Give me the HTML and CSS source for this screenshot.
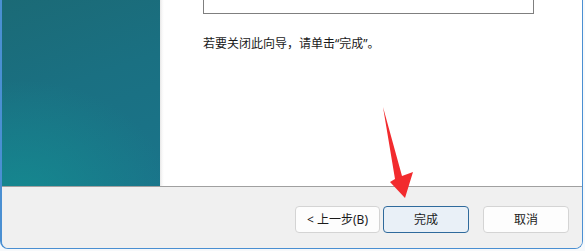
FILE: index.html
```html
<!DOCTYPE html>
<html lang="zh-CN">
<head>
<meta charset="utf-8">
<link rel="stylesheet" href="styles.css">
</head>
<body>
<div class="window">
  <div class="main">
    <div class="side"></div>
    <div class="content">
      <div class="textbox"></div>
      <p class="hint">若要关闭此向导，请单击“完成”。</p>
    </div>
  </div>
  <div class="footer">
    <button class="btn btn-back">&lt; 上一步(B)</button>
    <button class="btn btn-default">完成</button>
    <button class="btn btn-cancel">取消</button>
  </div>
</div>
<svg class="arrow" width="585" height="251" viewBox="0 0 585 251">
  <polygon points="383,107 402,176 413,172 405,198 390,182 395,179" fill="#f22b2e"/>
</svg>
</body>
</html>
```
FILE: styles.css
```css
html, body {
  margin: 0;
  padding: 0;
  background: #f7f9fb;
  width: 585px;
  height: 251px;
  overflow: hidden;
  font-family: "Noto Sans", "Noto Sans CJK SC", sans-serif;
  position: relative;
}

.window {
  width: 580px;
  height: 248px;
  border-left: 2px solid #4a8fd2;
  border-right: 1px solid #4a8fd2;
  border-bottom: 1px solid #4a8fd2;
  border-radius: 0 0 8px 8px;
  overflow: hidden;
  display: flex;
  flex-direction: column;
  background: #f0f0f0;
}

.main {
  display: flex;
  height: 186px;
  border-bottom: 1px solid #a0a0a0;
  flex: none;
}

.side {
  width: 158px;
  flex: none;
  background:
    radial-gradient(ellipse 150px 120px at 20px 200px, rgba(20,142,146,0.8), rgba(20,142,146,0) 100%),
    linear-gradient(160deg, #1b6a76 0%, #1a7082 45%, #1a748a 100%);
}

.content {
  flex: 1;
  background: linear-gradient(to right, #e6e6e6 0, #f8f8f8 2px, #ffffff 4px);
  padding-left: 43px;
}

.textbox {
  width: 329px;
  height: 13px;
  border-left: 1px solid #7f7f7f;
  border-right: 1px solid #7f7f7f;
  border-bottom: 1px solid #7f7f7f;
  background: #fff;
}

.hint {
  margin: 22px 0 0 0;
  font-size: 12px;
  line-height: 16px;
  color: #1a1a1a;
}

.footer {
  flex: 1;
  display: flex;
  align-items: flex-start;
  padding: 19px 0 0 293px;
  background: #f0f0f0;
}

.btn {
  font-family: "Noto Sans", "Noto Sans CJK SC", sans-serif;
  font-size: 12px;
  height: 27px;
  width: 85px;
  padding: 0;
  margin: 0;
  background: #fdfdfd;
  border: 1px solid #d4d4d4;
  border-radius: 4px;
  color: #1a1a1a;
  line-height: 25px;
  flex: none;
}

.btn-default {
  margin-left: 3px;
  width: 86px;
  background: #e9f0f7;
  border-color: #2f6a9c;
}

.btn-cancel {
  margin-left: 14px;
  width: 86px;
}

.arrow {
  position: absolute;
  left: 0;
  top: 0;
  pointer-events: none;
}
```
